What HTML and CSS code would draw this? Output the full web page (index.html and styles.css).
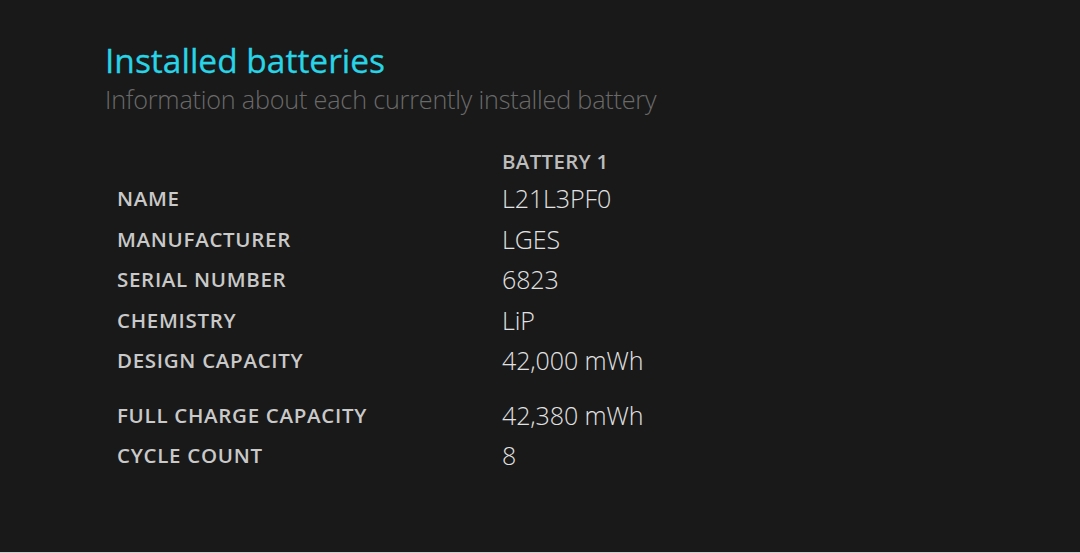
FILE: index.html
```html
<!DOCTYPE html>
<html>
<head>
<meta charset="utf-8">
<link rel="stylesheet" href="styles.css">
</head>
<body>
<div class="page">
  <h1 class="title">Installed batteries</h1>
  <p class="subtitle">Information about each currently installed battery</p>
  <table class="specs">
    <thead>
      <tr><td class="label"></td><td class="head">BATTERY 1</td></tr>
    </thead>
    <tbody>
      <tr><td class="label">NAME</td><td class="value">L21L3PF0</td></tr>
      <tr><td class="label">MANUFACTURER</td><td class="value">LGES</td></tr>
      <tr><td class="label">SERIAL NUMBER</td><td class="value">6823</td></tr>
      <tr><td class="label">CHEMISTRY</td><td class="value">LiP</td></tr>
      <tr><td class="label">DESIGN CAPACITY</td><td class="value">42,000 mWh</td></tr>
      <tr class="spacer"><td colspan="2"></td></tr>
      <tr><td class="label">FULL CHARGE CAPACITY</td><td class="value">42,380 mWh</td></tr>
      <tr><td class="label">CYCLE COUNT</td><td class="value">8</td></tr>
    </tbody>
  </table>
</div>
</body>
</html>
```
FILE: styles.css
```css
html {
  background: #cfcfcf;
}
body {
  margin: 0;
  font-family: "Open Sans", "Noto Sans", sans-serif;
}
.page {
  height: 552px;
  background: #191919;
  padding: 37px 0 0 105px;
  box-sizing: border-box;
}
.title {
  margin: 0;
  font-size: 33.5px;
  font-weight: 400;
  color: #28d4e6;
  line-height: 46px;
  letter-spacing: 0;
  -webkit-text-stroke: 0.3px #28d4e6;
}
.subtitle {
  margin: 0;
  font-size: 25.2px;
  font-weight: 300;
  color: #6a6a6a;
  line-height: 32px;
  letter-spacing: -0.2px;
}
.specs {
  margin-top: 29px;
  border-collapse: collapse;
}
.specs td {
  padding: 0 0 0 12px;
  height: 40.5px;
  vertical-align: middle;
}
.specs thead td {
  height: 34px;
}
.label {
  width: 373px;
  font-size: 20.5px;
  font-weight: 600;
  color: #c9c9c9;
  letter-spacing: 0.7px;
  padding-top: 2px;
}
.head {
  font-size: 20.5px;
  font-weight: 600;
  color: #bdbdbd;
  letter-spacing: 0.3px;
  vertical-align: top;
}
.value {
  font-size: 25px;
  font-weight: 300;
  color: #e2e2e2;
  letter-spacing: -0.1px;
}
.spacer td {
  height: 14px;
}
```
